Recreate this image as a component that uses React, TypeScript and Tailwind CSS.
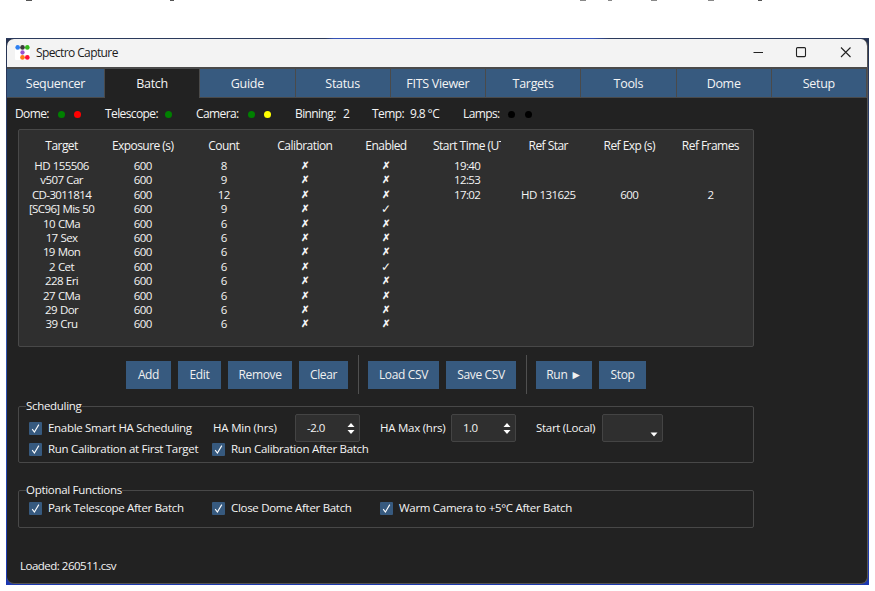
const TABS = ["Sequencer", "Batch", "Guide", "Status", "FITS Viewer", "Targets", "Tools", "Dome", "Setup"];

const COLUMNS = [
  "Target",
  "Exposure (s)",
  "Count",
  "Calibration",
  "Enabled",
  "Start Time (UT)",
  "Ref Star",
  "Ref Exp (s)",
  "Ref Frames",
];

const ROWS = [
  ["HD 155506", "600", "8", "✗", "✗", "19:40", "", "", ""],
  ["v507 Car", "600", "9", "✗", "✗", "12:53", "", "", ""],
  ["CD-3011814", "600", "12", "✗", "✗", "17:02", "HD 131625", "600", "2"],
  ["[SC96] Mis 50", "600", "9", "✗", "✓", "", "", "", ""],
  ["10 CMa", "600", "6", "✗", "✗", "", "", "", ""],
  ["17 Sex", "600", "6", "✗", "✗", "", "", "", ""],
  ["19 Mon", "600", "6", "✗", "✗", "", "", "", ""],
  ["2 Cet", "600", "6", "✗", "✓", "", "", "", ""],
  ["228 Eri", "600", "6", "✗", "✗", "", "", "", ""],
  ["27 CMa", "600", "6", "✗", "✗", "", "", "", ""],
  ["29 Dor", "600", "6", "✗", "✗", "", "", "", ""],
  ["39 Cru", "600", "6", "✗", "✗", "", "", "", ""],
];

function Logo() {
  return (
    <svg width="15" height="15" viewBox="0 0 14 14" className="mr-[6px] mb-px shrink-0">
      <rect width="14" height="14" rx="1" fill="#ffffff" />
      <circle cx="2.5" cy="2.3" r="2.2" fill="#2d7ff0" />
      <circle cx="7" cy="2.3" r="2.2" fill="#3b3b3b" />
      <circle cx="11.5" cy="2.3" r="2.2" fill="#35b81c" />
      <circle cx="7" cy="7" r="2" fill="#9b4fd0" />
      <circle cx="7" cy="11.6" r="2.2" fill="#ff7a1a" />
      <circle cx="11.5" cy="11.6" r="2.2" fill="#ff0f3c" />
    </svg>
  );
}

function Dot({ className }: { className: string }) {
  return <span className={`mt-[2px] block h-[7px] w-[7px] shrink-0 rounded-full ${className}`} />;
}

function Button({ label, className }: { label: string; className: string }) {
  return (
    <button
      className={`flex h-7 shrink-0 items-center justify-center bg-[#375a7f] text-[12px] tracking-[-0.35px] text-[#f0f0f0] ${className}`}
    >
      {label}
    </button>
  );
}

function Check({ label, className }: { label: string; className: string }) {
  return (
    <label className={`flex shrink-0 items-center ${className}`}>
      <svg width="13" height="13" viewBox="0 0 13 13" className="mr-[6px] shrink-0">
        <rect width="13" height="13" rx="1" fill="#375a7f" />
        <path d="M3.2 7.2 L5.4 10 L9.8 2.6" fill="none" stroke="#ffffff" strokeWidth="1.1" />
      </svg>
      <span>{label}</span>
    </label>
  );
}

function Spinner({ value }: { value: string }) {
  return (
    <div className="flex h-7 w-[65px] shrink-0 items-center justify-between rounded-[2px] border border-[#444] bg-[#2f2f2f] pr-[4px] pl-[11px]">
      <span className="tracking-[-0.5px]">{value}</span>
      <svg width="8" height="13" viewBox="0 0 8 13">
        <path d="M0.5 5 L4 1 L7.5 5 Z M0.5 8 L4 12 L7.5 8 Z" fill="#fff" />
      </svg>
    </div>
  );
}

function WindowControls() {
  return (
    <svg width="98" height="12" viewBox="0 0 98 12" fill="none" stroke="#222" strokeWidth="1.1" className="mb-[2px]">
      <path d="M0.5 6.5 H10" />
      <rect x="43.5" y="1.6" width="9" height="9" rx="1" />
      <path d="M88 1.5 L97.5 11 M97.5 1.5 L88 11" />
    </svg>
  );
}

export default function App() {
  return (
    <div className="h-[591px] w-[875px] overflow-hidden bg-white font-['Open_Sans',sans-serif] text-[11.5px] leading-[14px] tracking-[-0.3px] text-[#f4f4f4]">
      {/* Edge of the page lying behind the window */}
      <svg width="875" height="38" viewBox="0 0 875 38" className="block" fill="#555">
        <path d="M26 0h6v1h-6z M170 0h4v1h-4z M758 0h4v1h-4z" />
        <path d="M580 0h6v1h-6z M608 0h4v1h-4z M651 0h6v1h-6z M708 0h6v1h-6z" fill="#888" />
      </svg>
      <div className="ml-[6px] h-[547px] w-[863px] bg-linear-to-b from-[#26324f] via-[#3457ad] to-[#1c38b0] px-px pb-px">
        <div className="-mx-px h-px bg-[linear-gradient(to_right,#2b3a5c_37%,#3552b8_38%,#3552b8_68%,#2b3a5c_70%)]" />
        <div className="flex h-[545px] flex-col overflow-hidden rounded-[7px] border-r border-b border-[#555] bg-[#222]">
          {/* Title bar */}
          <div className="flex h-[28px] shrink-0 items-center bg-[#f3f3f3] pr-[16px] pl-[8px] text-[#1b1b1b]">
            <Logo />
            <span className="text-[12px] tracking-[-0.6px]">Spectro Capture</span>
            <div className="ml-auto">
              <WindowControls />
            </div>
          </div>

          {/* Tabs */}
          <div className="flex h-[31px] shrink-0 border-t-2 border-t-[#4a4a4a]">
            {TABS.map((tab) => (
              <div
                key={tab}
                className={`flex items-center justify-center border-r border-[#4a4a4a] pt-px text-[12.5px] tracking-[-0.3px] first:w-[98px] not-first:flex-1 ${
                  tab === "Batch" ? "bg-[#222]" : "border-b bg-[#375a7f]"
                }`}
              >
                {tab}
              </div>
            ))}
          </div>

          {/* Device status */}
          <div className="flex h-[31px] shrink-0 items-center pl-[8px] text-[12px] tracking-[-0.6px]">
            <div className="flex w-[90px] items-center">
              <span className="w-[43px]">Dome:</span>
              <Dot className="mr-[9px] bg-[#008000]" />
              <Dot className="bg-[#ff0000]" />
            </div>
            <div className="flex w-[91px] items-center">
              <span className="w-[60px]">Telescope:</span>
              <Dot className="bg-[#008000]" />
            </div>
            <div className="flex w-[99px] items-center">
              <span className="w-[52px]">Camera:</span>
              <Dot className="mr-[9px] bg-[#008000]" />
              <Dot className="bg-[#ffff00]" />
            </div>
            <span className="w-[48px]">Binning:</span>
            <span className="w-[29px]">2</span>
            <span className="w-[38px]">Temp:</span>
            <span className="w-[53px]">9.8 °C</span>
            <span className="w-[45px]">Lamps:</span>
            <Dot className="mr-[10px] bg-black" />
            <Dot className="bg-black" />
          </div>

          {/* Batch table */}
          <div className="ml-[11px] h-[218px] w-[736px] shrink-0 rounded-[2px] border border-[#484848] bg-[#2f2f2f] px-[2px] pt-[7px]">
            <div className="grid h-[22px] grid-cols-9 text-[12px] leading-[17px] tracking-[-0.55px]">
              {COLUMNS.map((col) => (
                <div key={col} className="flex justify-center whitespace-nowrap">
                  {col === "Start Time (UT)" ? <span className="w-[68px] overflow-hidden">{col}</span> : col}
                </div>
              ))}
            </div>
            {ROWS.map((row) => (
              <div
                key={row[0]}
                className="grid h-[14.4px] grid-cols-9 text-center tracking-[-0.6px] whitespace-nowrap [word-spacing:0.5px]"
              >
                {row.map((cell, i) => (
                  <span key={i} className={cell === "✗" ? "text-[9.5px] font-bold" : ""}>
                    {cell}
                  </span>
                ))}
              </div>
            ))}
          </div>

          {/* Actions */}
          <div className="mt-[8px] ml-[119px] flex h-[39px] shrink-0 items-center">
            <Button label="Add" className="mr-[7px] w-[45px]" />
            <Button label="Edit" className="mr-[7px] w-[43px]" />
            <Button label="Remove" className="mr-[7px] w-[64px]" />
            <Button label="Clear" className="w-[49px]" />
            <div className="mr-[9px] ml-[10px] h-[39px] w-px bg-[#505050]" />
            <Button label="Load CSV" className="mr-[7px] w-[71px]" />
            <Button label="Save CSV" className="w-[70px]" />
            <div className="mr-[9px] ml-[10px] h-[39px] w-px bg-[#505050]" />
            <Button label="Run ►" className="mr-[7px] w-[56px]" />
            <Button label="Stop" className="w-[47px]" />
          </div>

          <fieldset className="mt-[5px] ml-[11px] h-[64px] w-[736px] shrink-0 rounded-[2px] border border-[#484848] pl-[10px]">
            <legend className="-ml-[3px]">Scheduling</legend>
            <div className="mt-px flex h-7 items-center">
              <Check label="Enable Smart HA Scheduling" className="w-[184px]" />
              <span className="w-[82px] tracking-[-0.2px]">HA Min (hrs)</span>
              <Spinner value="-2.0" />
              <span className="ml-[20px] w-[71px] tracking-[-0.25px]">HA Max (hrs)</span>
              <Spinner value="1.0" />
              <span className="ml-[20px] w-[66px]">Start (Local)</span>
              <div className="flex h-7 w-[61px] items-end justify-end rounded-[2px] border border-[#444] bg-[#2f2f2f] pr-[4px] pb-[4px]">
                <svg width="8" height="5" viewBox="0 0 8 5">
                  <path d="M0.5 0.5 H7.5 L4 4.5 Z" fill="#fff" />
                </svg>
              </div>
            </div>
            <div className="flex h-[14px] items-center">
              <Check label="Run Calibration at First Target" className="w-[183px]" />
              <Check label="Run Calibration After Batch" className="" />
            </div>
          </fieldset>

          <fieldset className="mt-[20px] ml-[11px] h-[45px] w-[736px] shrink-0 rounded-[2px] border border-[#484848] pl-[10px]">
            <legend className="-ml-[3px]">Optional Functions</legend>
            <div className="flex h-[22px] items-center">
              <Check label="Park Telescope After Batch" className="w-[183px]" />
              <Check label="Close Dome After Batch" className="w-[168px]" />
              <Check label="Warm Camera to +5°C After Batch" className="" />
            </div>
          </fieldset>

          <div className="mt-[31px] pl-[13px] tracking-[-0.5px]">Loaded: 260511.csv</div>
        </div>
      </div>
    </div>
  );
}
